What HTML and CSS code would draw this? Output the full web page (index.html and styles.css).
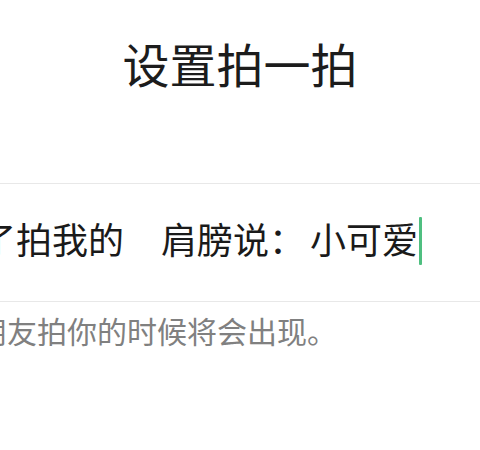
FILE: index.html
```html
<!DOCTYPE html>
<html lang="zh-CN">
<head>
<meta charset="utf-8">
<title>设置拍一拍</title>
<link rel="stylesheet" href="styles.css">
</head>
<body>
<main class="page">
  <h1 class="title">设置拍一拍</h1>
  <section class="field">
    <div class="line">
      <span class="prefix">拍了拍我的</span>
      <span class="value"><span class="lead">肩膀说：</span><span class="typed">小可爱</span></span>
      <span class="cursor"></span>
    </div>
  </section>
  <p class="hint">当朋友拍你的时候将会出现。</p>
</main>
</body>
</html>
```

FILE: styles.css
```css
html, body {
  margin: 0;
  padding: 0;
  background: #ffffff;
}

body {
  width: 480px;
  height: 450px;
  overflow: hidden;
  font-family: "Noto Sans CJK SC", "Noto Sans", sans-serif;
  color: #1a1a1a;
}

.page {
  display: flex;
  flex-direction: column;
}

.title {
  margin: 0 0 90px;
  padding-top: 33px;
  height: 60px;
  line-height: 60px;
  font-size: 47px;
  font-weight: 400;
  text-align: center;
  color: #1c1c1c;
}

.field {
  border-top: 1px solid #e8e8e8;
  border-bottom: 1px solid #e8e8e8;
  padding: 36px 0 45px;
}

.line {
  display: flex;
  align-items: flex-start;
  margin-left: -56px;
  height: 36px;
  line-height: 36px;
  font-size: 36px;
  white-space: nowrap;
  color: #1a1a1a;
}

.value {
  margin-left: 37px;
}

.typed {
  margin-left: 5px;
}

.cursor {
  display: block;
  width: 3px;
  height: 48px;
  margin-top: -3px;
  margin-left: 1px;
  background: #4fbf80;
  border-radius: 1px;
}

.hint {
  margin: 8px 0 0 -53px;
  line-height: 40px;
  font-size: 30px;
  color: #808080;
  white-space: nowrap;
}
```
